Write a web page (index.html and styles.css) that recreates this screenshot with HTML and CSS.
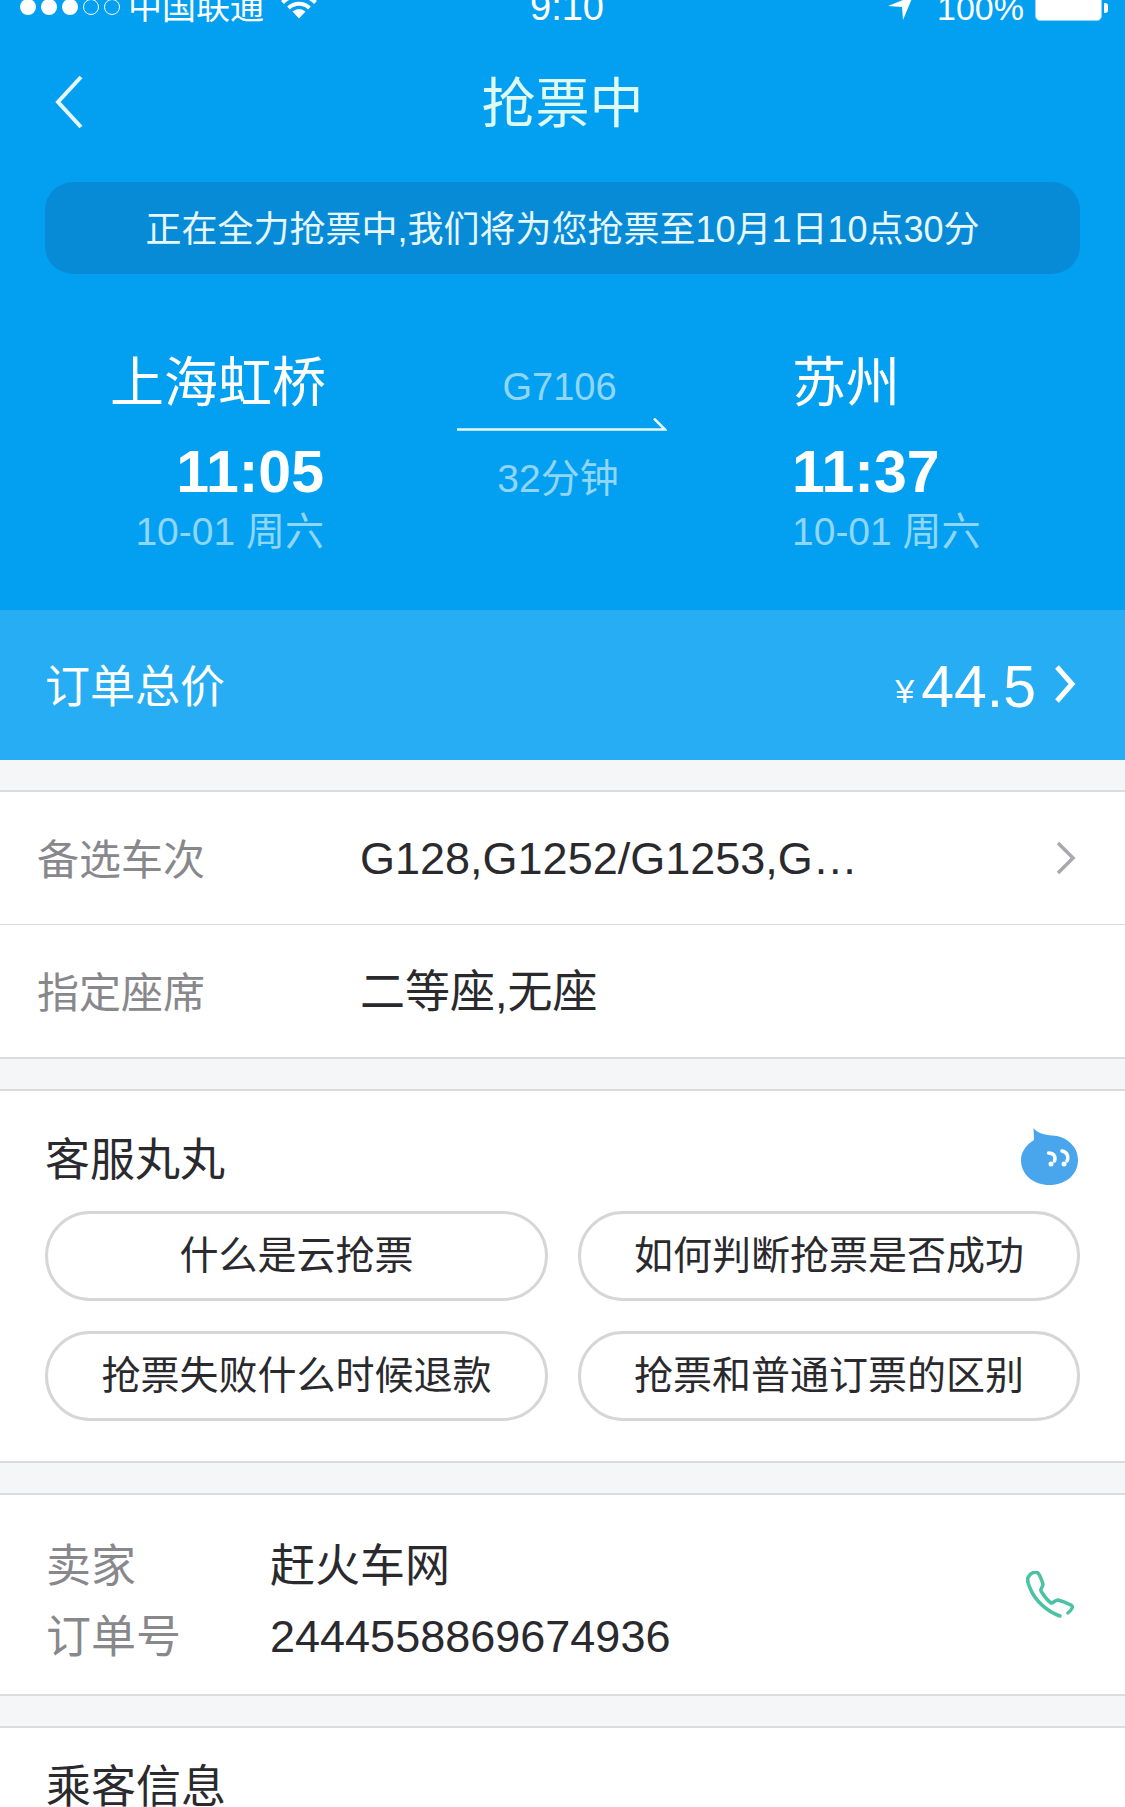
FILE: index.html
```html
<!DOCTYPE html>
<html lang="zh-CN">
<head>
    <meta charset="UTF-8">
    <meta name="viewport" content="width=device-width, initial-scale=1.0">
    <title>抢票中</title>
    <link rel="stylesheet" href="styles.css">
</head>
<body>
    <div class="page">
        <header class="top">
            <div class="status-bar">
                <div class="status-left">
                    <div class="signal">
                        <span class="dot"></span><span class="dot"></span><span class="dot"></span>
                        <span class="dot empty"></span><span class="dot empty"></span>
                    </div>
                    <span class="carrier">中国联通</span>
                    <svg class="wifi" width="36" height="19" viewBox="0 0 36 19">
                        <path d="M18 18.5 L11.5 11.5 A9.5 9.5 0 0 1 24.5 11.5 Z" fill="#fff"/>
                        <path d="M7.5 8 A15 15 0 0 1 28.5 8" fill="none" stroke="#fff" stroke-width="4"/>
                        <path d="M1.5 2.5 A23 23 0 0 1 34.5 2.5" fill="none" stroke="#fff" stroke-width="4"/>
                    </svg>
                </div>
                <span class="clock">9:10</span>
                <div class="status-right">
                    <svg class="location" width="25" height="20" viewBox="0 0 25 20">
                        <polygon points="0,6 25,-4 15,20 14,7" fill="#fff"/>
                    </svg>
                    <span class="battery-text">100%</span>
                    <div class="battery"></div>
                    <div class="battery-nub"></div>
                </div>
            </div>

            <div class="nav">
                <svg class="back" width="30" height="56" viewBox="0 0 30 56">
                    <polyline points="27,3 4,28 27,53" fill="none" stroke="#e6f7ff" stroke-width="4"/>
                </svg>
                <h1 class="nav-title">抢票中</h1>
            </div>

            <div class="notice">正在全力抢票中,我们将为您抢票至10月1日10点30分</div>

            <div class="route">
                <div class="route-side route-from">
                    <div class="station">上海虹桥</div>
                    <div class="time">11:05</div>
                    <div class="date">10-01 周六</div>
                </div>
                <div class="route-mid">
                    <div class="train-no">G7106</div>
                    <svg class="route-arrow" width="210" height="14" viewBox="0 0 210 14">
                        <path d="M0 11.5 H208 L197 0.5" fill="none" stroke="#e6f7ff" stroke-width="2.5"/>
                    </svg>
                    <div class="duration">32分钟</div>
                </div>
                <div class="route-side">
                    <div class="station">苏州</div>
                    <div class="time">11:37</div>
                    <div class="date">10-01 周六</div>
                </div>
            </div>
        </header>

        <div class="price-bar">
            <span class="price-label">订单总价</span>
            <div class="price">
                <span class="yen">¥</span>
                <span class="amount">44.5</span>
                <svg class="price-chevron" width="22" height="38" viewBox="0 0 22 38">
                    <polyline points="3,2 18,19 3,36" fill="none" stroke="#fff" stroke-width="5"/>
                </svg>
            </div>
        </div>

        <section class="card list">
            <div class="list-row">
                <span class="list-label">备选车次</span>
                <span class="list-value">G128,G1252/G1253,G…</span>
                <svg class="row-chevron" width="22" height="34" viewBox="0 0 22 34">
                    <polyline points="3,2 18,17 3,32" fill="none" stroke="#a9a9ad" stroke-width="3.5"/>
                </svg>
            </div>
            <div class="list-row">
                <span class="list-label">指定座席</span>
                <span class="list-value list-value-cjk">二等座,无座</span>
            </div>
        </section>

        <section class="card service">
            <div class="service-head">
                <h2 class="section-title">客服丸丸</h2>
                <svg class="bubble" width="57" height="58" viewBox="0 0 57 58">
                    <path d="M12.5 0 C16 5 24 7 31 7.500 C45 8 57 18 57 32 C57 47 44 57 28.500 57 C13 57 0 47 0 32 C0 24 5 17 13 12 Z" fill="#4aa6ec"/>
                    <path d="M27.500 25 C33 25 35 29 33.500 33" fill="none" stroke="#fff" stroke-width="3.500" stroke-linecap="round"/>
                    <circle cx="30" cy="36" r="2.500" fill="#fff"/>
                    <path d="M41 23 C46 24 48 28 46 33" fill="none" stroke="#fff" stroke-width="3.500" stroke-linecap="round"/>
                    <circle cx="43" cy="36" r="2.500" fill="#fff"/>
                </svg>
            </div>
            <div class="faq">
                <div class="faq-item">什么是云抢票</div>
                <div class="faq-item">如何判断抢票是否成功</div>
                <div class="faq-item">抢票失败什么时候退款</div>
                <div class="faq-item">抢票和普通订票的区别</div>
            </div>
        </section>

        <section class="card seller">
            <div class="seller-info">
                <div class="seller-row">
                    <span class="seller-label">卖家</span>
                    <span class="seller-value">赶火车网</span>
                </div>
                <div class="seller-row">
                    <span class="seller-label">订单号</span>
                    <span class="seller-value seller-number">2444558869674936</span>
                </div>
            </div>
            <svg class="phone" width="48" height="47" viewBox="0 0 48 47">
                <path d="M34 45 C22 41 9 30 4 17 C2 12 0 8 3 5 C5 2 9 0 12 2 C14 4 16 10 17 13 C17 16 14 18 15 20 C18 25 21 29 25 32 C28 32 29 29 32 29 C36 30 41 32 45 34 C47 35 47 38 42 42" fill="none" stroke="#4cc2a4" stroke-width="3.500" stroke-linecap="round" stroke-linejoin="round"/>
            </svg>
        </section>

        <section class="card passenger">
            <h2 class="section-title">乘客信息</h2>
        </section>
    </div>
</body>
</html>
```

FILE: styles.css
```css
* {
    margin: 0;
    padding: 0;
    box-sizing: border-box;
}

body {
    background-color: #f5f6f8;
    font-family: "Liberation Sans", "Noto Sans CJK SC", sans-serif;
    color: #2a2a2e;
}

.page {
    width: 1125px;
    height: 1807px;
    overflow: hidden;
}

h1, h2 {
    font-weight: normal;
}

/* Blue header */
.top {
    height: 610px;
    background-color: #03a0f2;
    color: #fff;
}

.status-bar {
    height: 24px;
    padding: 0 17px 0 20px;
    display: grid;
    grid-template-columns: 1fr auto 1fr;
    grid-template-rows: 24px;
    align-items: end;
    overflow: hidden;
}

.status-left,
.status-right {
    display: flex;
    align-items: flex-end;
}

.status-right {
    justify-content: flex-end;
}

.signal {
    display: flex;
    gap: 5px;
    margin-bottom: 9px;
}

.dot {
    width: 16px;
    height: 16px;
    border-radius: 50%;
    background-color: #fff;
}

.dot.empty {
    background: none;
    border: 1px solid #fff;
}

.carrier {
    margin-left: 8px;
    font-size: 34px;
    line-height: 33px;
}

.wifi {
    margin: 0 0 5px 17px;
}

.clock {
    margin: 0 0 2px 6px;
    font-size: 38px;
    line-height: 30px;
}

.location {
    margin-bottom: 4px;
}

.battery-text {
    margin: 0 0 1px 24px;
    font-size: 34px;
    line-height: 30px;
}

.battery {
    width: 67px;
    height: 30px;
    margin: 0 0 3px 11px;
    background-color: #fff;
    border: 1px solid #8fd6f9;
    border-radius: 5px;
}

.battery-nub {
    width: 4px;
    height: 10px;
    margin: 0 0 11px 2px;
    background-color: #fff;
    border-radius: 0 3px 3px 0;
}

.nav {
    position: relative;
    height: 158px;
    display: flex;
    justify-content: center;
    align-items: center;
}

.back {
    position: absolute;
    left: 54px;
    top: 50px;
}

.nav-title {
    margin-top: 2px;
    font-size: 54px;
    line-height: 60px;
    color: #dffaf0;
}

.notice {
    height: 92px;
    margin: 0 45px;
    background-color: #078bd7;
    border-radius: 28px;
    font-size: 36px;
    line-height: 96px;
    text-align: center;
    color: #e6f7ff;
}

.route {
    display: flex;
}

.route-side {
    flex: 1;
    padding-top: 79px;
}

.route-from {
    flex: none;
    width: 326px;
    text-align: right;
}

.route-from .time,
.route-from .date {
    margin-right: 2px;
}

.route-mid {
    width: 210px;
    margin: 0 125px 0 131px;
    padding-top: 88px;
    text-align: center;
    color: #8fd6f9;
}

.station {
    font-size: 54px;
    line-height: 60px;
}

.time {
    margin-top: 29px;
    font-size: 59px;
    line-height: 60px;
    font-weight: bold;
}

.date {
    margin-top: 10px;
    font-size: 39px;
    line-height: 40px;
    color: #8fd6f9;
}

.train-no {
    margin-right: 5px;
    font-size: 38px;
    line-height: 50px;
}

.route-arrow {
    display: block;
    margin-top: 6px;
}

.duration {
    margin: 22px 8px 0 0;
    font-size: 39px;
    line-height: 50px;
}

/* Price */
.price-bar {
    height: 150px;
    padding: 0 49px 0 45px;
    display: flex;
    justify-content: space-between;
    align-items: center;
    background-color: #27adf3;
    color: #fff;
}

.price-label {
    margin-bottom: 4px;
    font-size: 45px;
}

.price {
    display: flex;
    align-items: center;
}

.yen {
    margin-top: 12px;
    font-size: 34px;
}

.amount {
    margin: 4px 0 0 7px;
    font-size: 59px;
}

.price-chevron {
    margin: 0 0 2px 18px;
}

/* Cards */
.card {
    margin-top: 30px;
    background-color: #fff;
    border-top: 2px solid #dcdcde;
    border-bottom: 2px solid #dcdcde;
}

.list {
    height: 269px;
}

.list-row {
    height: 132px;
    display: flex;
    align-items: center;
    padding: 0 48px 0 37px;
}

.list-row + .list-row {
    border-top: 1px solid #dcdcde;
    height: 133px;
}

.list-label {
    width: 323px;
    margin-bottom: 4px;
    font-size: 42px;
    color: #88888c;
}

.list-value {
    flex: 1;
    margin-top: 2px;
    font-size: 45px;
}

.list-value-cjk {
    margin: 0 0 6px;
}

.section-title {
    font-size: 45px;
    line-height: 60px;
}

.service {
    height: 374px;
    padding: 0 45px;
}

.service-head {
    display: flex;
    justify-content: space-between;
    align-items: flex-start;
    padding: 40px 2px 0 0;
    height: 120px;
}

.bubble {
    margin-top: -3px;
}

.faq {
    display: grid;
    grid-template-columns: 503px 502px;
    justify-content: space-between;
    row-gap: 30px;
}

.faq-item {
    height: 90px;
    border: 3px solid #d6d6d8;
    border-radius: 45px;
    font-size: 39px;
    line-height: 84px;
    text-align: center;
}

.seller {
    height: 203px;
    padding: 0 51px 0 46px;
    display: flex;
    justify-content: space-between;
    align-items: center;
}

.seller-info {
    margin-top: 7px;
    display: flex;
    flex-direction: column;
    gap: 11px;
}

.seller-row {
    display: flex;
    height: 60px;
    align-items: center;
    font-size: 45px;
}

.seller-label {
    width: 224px;
    color: #88888c;
}

.seller-value {
    white-space: nowrap;
}

.seller-number {
    margin-top: 7px;
}

.passenger {
    height: 120px;
    padding: 30px 46px 0;
    border-bottom: none;
}
```
